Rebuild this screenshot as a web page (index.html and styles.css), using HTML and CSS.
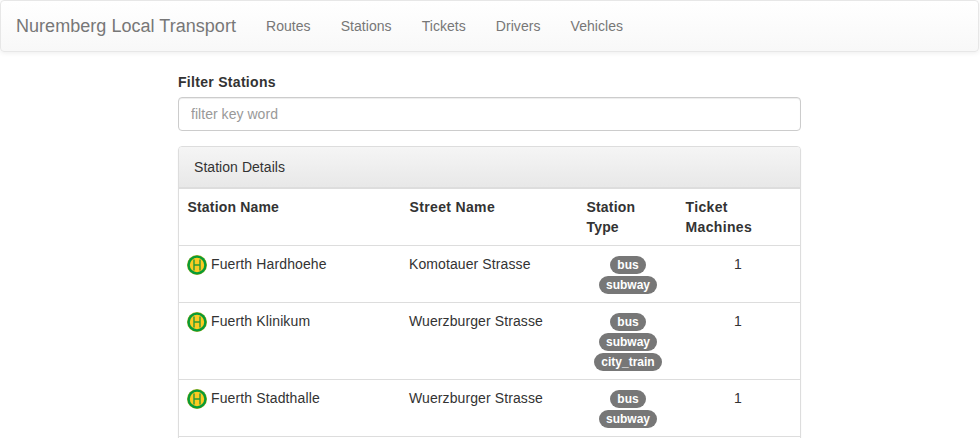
FILE: index.html
```
<!DOCTYPE html>
<html lang="en">
<head>
<meta charset="utf-8">
<title>Nuremberg Local Transport</title>
<link rel="stylesheet" href="styles.css">
</head>
<body>
<svg class="defs" width="0" height="0" aria-hidden="true">
  <symbol id="stop" viewBox="0 0 20 20">
    <circle cx="10" cy="10" r="10" fill="#b5b52a"/>
    <circle cx="10" cy="10" r="9.6" fill="#089b35"/>
    <circle cx="10" cy="10" r="7.2" fill="#fccb22"/>
    <path d="M7 4.5v11M13 4.5v11M7 10h6" fill="none" stroke="#2a9a35" stroke-width="1.4"/>
  </symbol>
</svg>
<nav class="navbar">
  <a class="brand">Nuremberg Local Transport</a>
  <ul class="nav">
    <li>Routes</li><li>Stations</li><li>Tickets</li><li>Drivers</li><li>Vehicles</li>
  </ul>
</nav>
<main class="content">
  <label class="filter-label" for="filter">Filter Stations</label>
  <input class="filter" id="filter" type="text" placeholder="filter key word">
  <section class="panel">
    <div class="panel-heading">Station Details</div>
    <table class="table">
      <colgroup><col class="c-name"><col class="c-street"><col class="c-type"><col class="c-machines"></colgroup>
      <thead>
        <tr><th>Station Name</th><th class="wide">Street Name</th><th class="type">Station<br>Type</th><th class="wide">Ticket<br>Machines</th></tr>
      </thead>
      <tbody>
        <tr>
          <td><div class="station"><svg class="icon"><use href="#stop"/></svg><span>Fuerth Hardhoehe</span></div></td>
          <td>Komotauer Strasse</td>
          <td><div class="badges"><span class="badge">bus</span><span class="badge">subway</span></div></td>
          <td class="center">1</td>
        </tr>
        <tr>
          <td><div class="station"><svg class="icon"><use href="#stop"/></svg><span>Fuerth Klinikum</span></div></td>
          <td>Wuerzburger Strasse</td>
          <td><div class="badges"><span class="badge">bus</span><span class="badge">subway</span><span class="badge">city_train</span></div></td>
          <td class="center">1</td>
        </tr>
        <tr>
          <td><div class="station"><svg class="icon"><use href="#stop"/></svg><span>Fuerth Stadthalle</span></div></td>
          <td>Wuerzburger Strasse</td>
          <td><div class="badges"><span class="badge">bus</span><span class="badge">subway</span></div></td>
          <td class="center">1</td>
        </tr>
        <tr><td></td><td></td><td></td><td></td></tr>
      </tbody>
    </table>
  </section>
</main>
</body>
</html>
```
FILE: styles.css
```
* { box-sizing: border-box; }
html { overflow: hidden; }
body {
  margin: 0;
  font: 14px/20px "Liberation Sans", Arial, sans-serif;
  color: #333;
  background: #fff;
}
.defs { position: absolute; }
.navbar {
  display: flex;
  width: 979px;
  height: 52px;
  border: 1px solid #e7e7e7;
  border-radius: 4px;
  background: linear-gradient(#fff, #f8f8f8);
  box-shadow: inset 0 1px 0 rgba(255,255,255,.15), 0 1px 5px rgba(0,0,0,.075);
  color: #777;
}
.brand { padding: 15px; font-size: 18px; letter-spacing: .035px; }
.nav { display: flex; margin: 0; padding: 0; list-style: none; letter-spacing: .05px; }
.nav li { padding: 15px; }
.content { width: 623px; margin: 20px 0 0 178px; }
.filter-label { display: block; margin-bottom: 5px; font-weight: bold; letter-spacing: .3px; }
.filter {
  display: block;
  width: 100%;
  height: 34px;
  margin-bottom: 15px;
  padding: 6px 12px;
  border: 1px solid #ccc;
  border-radius: 4px;
  box-shadow: inset 0 1px 1px rgba(0,0,0,.075);
  font: inherit;
  letter-spacing: .04px;
}
.filter::placeholder { color: #999; opacity: 1; }
.panel {
  border: 1px solid #ddd;
  border-radius: 4px;
  box-shadow: 0 1px 2px rgba(0,0,0,.05);
}
.panel-heading {
  padding: 10px 15px;
  border-bottom: 1px solid #ddd;
  border-radius: 3px 3px 0 0;
  background: linear-gradient(#f5f5f5, #e8e8e8);
  letter-spacing: .05px;
}
.table { width: 100%; table-layout: fixed; border-collapse: separate; border-spacing: 0; }
.c-name { width: 222px; }
.c-street { width: 178px; }
.c-type { width: 98px; }
th, td { padding: 8px; text-align: left; vertical-align: top; border-top: 1px solid #ddd; }
th { padding-left: 8.5px; letter-spacing: .17px; }
td { letter-spacing: .1px; }
.wide { letter-spacing: .35px; }
.type { padding-left: 7.5px; }
td.center { padding-right: 9px; text-align: center; }
.station { display: flex; gap: 4px; letter-spacing: .13px; }
.icon { width: 20px; height: 20px; margin-top: 1px; }
.badges { display: flex; flex-direction: column; align-items: center; gap: 2px; padding-top: 2px; }
.badge {
  padding: 3px 7px;
  border-radius: 10px;
  background: #777;
  color: #fff;
  font-size: 12px;
  font-weight: bold;
  line-height: 12px;
  letter-spacing: 0;
  white-space: nowrap;
}
```
